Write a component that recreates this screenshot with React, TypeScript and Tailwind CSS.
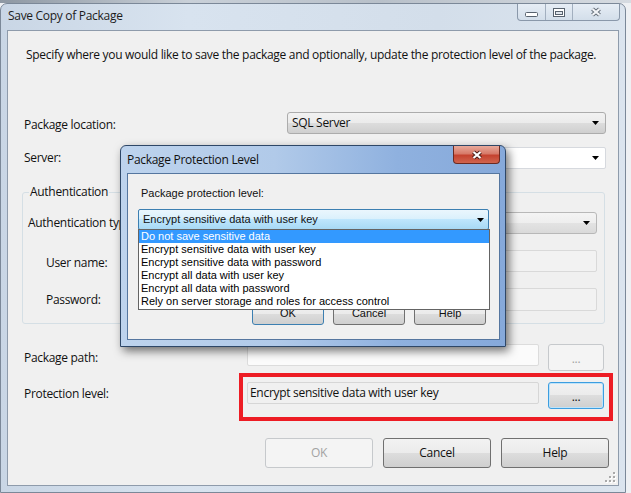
import React from "react";

const seg = "font-['Open_Sans','Noto_Sans',sans-serif] tracking-[-0.3px]";
const ms = "font-['Liberation_Sans',Arial,sans-serif]";

const btnGrad =
  "bg-[linear-gradient(#f2f2f2_0%,#ebebeb_50%,#dddddd_50%,#cfcfcf_100%)]";

function Arrow({ color = "#000" }: { color?: string }) {
  return (
    <svg width="7" height="4" viewBox="0 0 7 4">
      <polygon points="0,0 7,0 3.5,4" fill={color} />
    </svg>
  );
}

function XGlyph({ outline, fill }: { outline: string; fill: string }) {
  const d = "M2.5 2 L9.5 8 M9.5 2 L2.5 8";
  return (
    <svg width="12" height="10" viewBox="0 0 12 10">
      <path d={d} stroke={outline} strokeWidth="4.2" strokeLinecap="butt" />
      <path d={d} stroke={fill} strokeWidth="2.2" strokeLinecap="butt" />
    </svg>
  );
}

function MainButton({
  label,
  disabled,
}: {
  label: string;
  disabled?: boolean;
}) {
  return (
    <div
      className={`w-[108px] h-[30px] rounded-[3px] border flex items-center justify-center ${
        disabled
          ? "border-[#c6c9cc] bg-[#f4f4f4] text-[#a3a3a3]"
          : `border-[#707070] ${btnGrad} text-[#111]`
      }`}
    >
      {label}
    </div>
  );
}

function DlgButton({ label, def }: { label: string; def?: boolean }) {
  return (
    <div
      className={`w-[72px] h-[23px] rounded-[3px] border flex items-center justify-center ${btnGrad} ${
        def ? "border-[#3c7fb1]" : "border-[#707070]"
      }`}
    >
      {label}
    </div>
  );
}

export default function App() {
  return (
    <div
      className={`relative w-[631px] h-[493px] overflow-hidden bg-[#eef0f3] text-[12px] text-[#111] ${seg}`}
    >
      <div className="h-[3px] bg-[linear-gradient(90deg,#8e98a3,#c9d0d8_30%,#b8c0c9_60%,#d6dbe1)]" />
      {/* Main window */}
      <div className="w-[626px] h-[490px] rounded-t-[7px] border border-[#7b8898] bg-[linear-gradient(90deg,#c9d6e5_0%,#d8e3ef_30%,#d3deea_70%,#dbe4ee_100%)] flex flex-col">
        {/* title bar */}
        <div className="h-[26px] flex items-start shrink-0">
          <div className="pl-[7px] pt-[4px] leading-[16px] text-[#1c1c1c]">
            Save Copy of Package
          </div>
          <div className="ml-auto mr-[5px] h-[17px] flex border border-t-0 border-[#8a98aa] rounded-b-[4px] bg-[linear-gradient(#e6edf5,#d3deea)] overflow-hidden">
            <div className="w-[28px] flex items-center justify-center border-r border-[#a2afbf]">
              <svg width="13" height="5" viewBox="0 0 13 5" className="mt-[5px]">
                <rect x="0.5" y="0.5" width="12" height="4" rx="1" fill="#fff" stroke="#58626e" />
              </svg>
            </div>
            <div className="w-[27px] flex items-center justify-center border-r border-[#a2afbf]">
              <svg width="12" height="9" viewBox="0 0 12 9">
                <rect x="0.5" y="0.5" width="11" height="8" fill="#fff" stroke="#58626e" />
                <rect x="2.5" y="3.5" width="7" height="3" fill="#dfe5ec" stroke="#58626e" />
              </svg>
            </div>
            <div className="w-[46px] flex items-center justify-center">
              <XGlyph outline="#67707b" fill="#f2f4f7" />
            </div>
          </div>
        </div>
        {/* client */}
        <div className="ml-[6px] w-[612px] h-[456px] border border-[#8e9bab] bg-[#f0f0f0] relative flex flex-col shrink-0">
          <p className="mt-[16px] ml-[18px] h-[16px] leading-[16px] whitespace-nowrap">
            Specify where you would like to save the package and optionally, update the protection level of the package.
          </p>
          {/* Package location */}
          <div className="mt-[49px] h-[22px] flex items-center">
            <span className="w-[279px] pl-[16px] pt-[4px] leading-[16px]">Package location:</span>
            <div className={`w-[319px] h-[22px] rounded-[3px] border border-[#acacac] ${btnGrad} flex items-center pl-[4px] pr-[6px]`}>
              <span className="flex-1">SQL Server</span>
              <Arrow />
            </div>
          </div>
          {/* Server */}
          <div className="mt-[13px] h-[22px] flex items-center">
            <span className="w-[279px] pl-[16px] leading-[16px]">Server:</span>
            <div className="w-[319px] h-[22px] rounded-[2px] border border-[#d6d9de] bg-white flex items-center justify-end pr-[6px]">
              <Arrow />
            </div>
          </div>
          {/* Authentication group */}
          <div className="mt-[23px] ml-[14px] w-[583px] h-[132px] border border-[#d5dfe5] rounded-[3px] relative flex flex-col">
            <span className="absolute -top-[9px] left-[6px] px-[1px] leading-[16px] bg-[#f0f0f0]">
              Authentication
            </span>
            <div className="mt-[19px] h-[22px] flex items-center">
              <span className="w-[224px] pl-[5px] leading-[16px] whitespace-nowrap">Authentication type:</span>
              <div className={`w-[350px] h-[22px] rounded-[3px] border border-[#b8b8b8] bg-[linear-gradient(#f4f4f4_0%,#eeeeee_50%,#e3e3e3_50%,#dadada_100%)] flex items-center justify-end pr-[6px]`}>
                <Arrow />
              </div>
            </div>
            <div className="mt-[16px] h-[22px] flex items-center">
              <span className="w-[224px] pl-[23px] pt-[3px] leading-[16px]">User name:</span>
              <div className="w-[350px] h-[22px] rounded-[2px] border border-[#d9d9d9] bg-[#f2f2f2]" />
            </div>
            <div className="mt-[16px] h-[23px] flex items-center">
              <span className="w-[224px] pl-[23px] leading-[16px]">Password:</span>
              <div className="w-[350px] h-[23px] rounded-[2px] border border-[#d9d9d9] bg-[#f2f2f2]" />
            </div>
          </div>
          {/* Package path */}
          <div className="mt-[20px] h-[27px] flex items-start">
            <span className="w-[239px] pl-[16px] mt-[6px] leading-[16px]">Package path:</span>
            <div className="w-[292px] h-[22px] rounded-[2px] border border-[#dcdcdc] bg-[#fbfbfb]" />
            <div className="ml-[9px] w-[56px] h-[27px] rounded-[3px] border border-[#c6c9cc] bg-[#f4f4f4] flex items-center justify-center text-[#a3a3a3] leading-[16px] pt-[2px]">
              ...
            </div>
          </div>
          {/* Protection level */}
          <div className="mt-[2px] h-[48px] flex items-start">
            <span className="w-[231px] pl-[16px] mt-[13px] leading-[16px]">Protection level:</span>
            <div className="w-[374px] h-[48px] border-[4px] border-[#ed1c24] flex items-start pt-[5px] pl-[4px]">
              <div className="w-[292px] h-[22px] rounded-[2px] border border-[#d6d6d6] bg-[#f0f0f0] flex items-center pl-[2px] leading-[16px]">
                Encrypt sensitive data with user key
              </div>
              <div className={`ml-[9px] w-[56px] h-[27px] rounded-[3px] border border-[#3c9ee0] ${btnGrad} flex items-center justify-center leading-[16px] pt-[2px] shadow-[inset_0_0_0_1px_#bfe3f9]`}>
                ...
              </div>
            </div>
          </div>
          {/* Bottom buttons */}
          <div className="mt-[17px] h-[30px] flex gap-[10px] ml-[257px]">
            <MainButton label="OK" disabled />
            <MainButton label="Cancel" />
            <MainButton label="Help" />
          </div>
          {/* resize grip */}
          <svg width="12" height="12" viewBox="0 0 12 12" className="absolute right-[2px] bottom-[2px]">
            {[
              [9, 1],
              [5, 5],
              [9, 5],
              [1, 9],
              [5, 9],
              [9, 9],
            ].map(([x, y], i) => (
              <g key={i}>
                <rect x={x + 1} y={y + 1} width="2" height="2" fill="#ffffff" />
                <rect x={x} y={y} width="2" height="2" fill="#a9a9a9" />
              </g>
            ))}
          </svg>
        </div>
      </div>

      {/* Package Protection Level dialog */}
      <div className="absolute left-[120px] top-[145px] w-[386px] h-[202px] rounded-t-[6px] border border-[#2e4767] bg-[linear-gradient(90deg,#bdd3ed_0%,#b1cae9_40%,#8fb1df_72%,#86a9da_100%)] shadow-[3px_4px_10px_rgba(0,0,0,0.55)] flex flex-col">
        <div className="h-[27px] flex items-start shrink-0">
          <div className="pl-[6px] pt-[6px] leading-[16px] text-[#111]">Package Protection Level</div>
          <div className="ml-auto mr-[5px] w-[47px] h-[18px] rounded-b-[4px] border border-t-0 border-[#6b2a22] bg-[linear-gradient(#e8a99b_0%,#d77a69_45%,#c5422f_55%,#d0654f_100%)] flex items-center justify-center">
            <XGlyph outline="#4a1d17" fill="#ffffff" />
          </div>
        </div>
        <div className={`ml-[6px] w-[373px] h-[167px] border border-[#55769f] bg-[#f0f0f0] relative flex flex-col shrink-0 ${ms} text-[11px] tracking-normal`}>
          <div className="mt-[13px] pl-[13px] leading-[13px]">Package protection level:</div>
          <div className="mt-[9px] ml-[10px] w-[351px] h-[21px] rounded-[2px] border border-[#3c7fb1] bg-[linear-gradient(#eaf6fd_0%,#d9f0fc_50%,#bee6fd_50%,#a7d9f5_100%)] flex items-center pl-[4px] pr-[4px]">
            <span className="flex-1 leading-[13px]">Encrypt sensitive data with user key</span>
            <Arrow />
          </div>
          <div className="mt-[72px] ml-[124px] flex gap-[9px]">
            <DlgButton label="OK" def />
            <DlgButton label="Cancel" />
            <DlgButton label="Help" />
          </div>
          {/* dropdown list */}
          <div className="absolute left-[10px] top-[55px] w-[352px] h-[81px] border border-[#646464] bg-white flex flex-col">
            {[
              "Do not save sensitive data",
              "Encrypt sensitive data with user key",
              "Encrypt sensitive data with password",
              "Encrypt all data with user key",
              "Encrypt all data with password",
              "Rely on server storage and roles for access control",
            ].map((t, i) => (
              <div
                key={t}
                className={`h-[13px] leading-[13px] pl-[2px] ${
                  i === 0 ? "bg-[#3399ff] text-white" : "text-black"
                }`}
              >
                {t}
              </div>
            ))}
          </div>
        </div>
      </div>
    </div>
  );
}
